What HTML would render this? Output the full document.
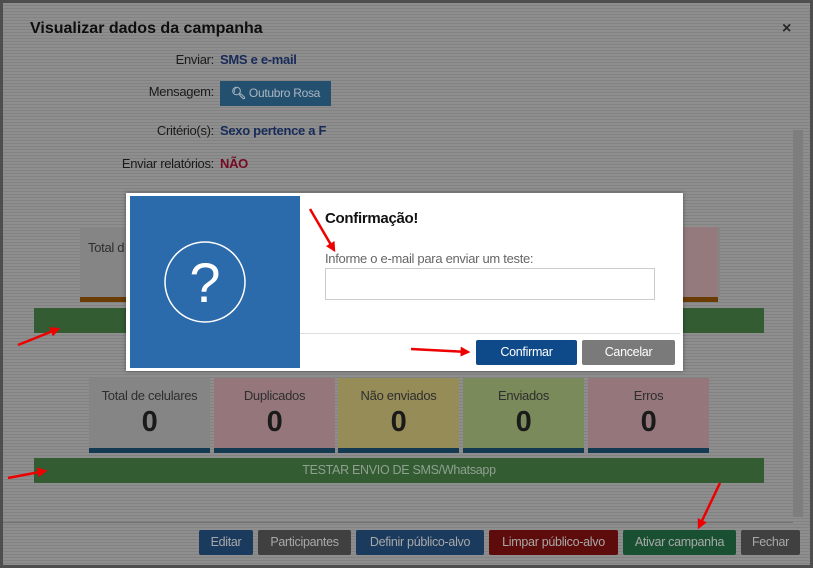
<!DOCTYPE html>
<html><head><meta charset="utf-8"><style>
*{margin:0;padding:0;box-sizing:border-box}
body{width:813px;height:568px;overflow:hidden;position:relative;background:#4e4e4e;font-family:"Liberation Sans",sans-serif}
.a{position:absolute}
.nr{letter-spacing:-0.3px}
#m{left:3px;top:3px;width:807px;height:562px;background:repeating-linear-gradient(180deg,#8e8e8e 0,#8e8e8e 2px,#828282 2px,#828282 3px)}
.lbl{position:absolute;right:599px;font-size:13px;color:#1a1a1a;text-align:right;white-space:nowrap}
.val{position:absolute;left:220px;font-size:13px;font-weight:bold;color:#172b58}
.box{position:absolute;top:378px;height:75px;width:121px;text-align:center;border-bottom:5px solid #143a52}
.box .t{font-size:13px;color:#2e2e2e;margin-top:10px}
.box .n{font-size:29px;font-weight:bold;color:#1a1a1a;margin-top:3px}
.btn{position:absolute;top:530px;height:25px;color:#a8a8a8;font-size:12.5px;line-height:25px;text-align:center;border-radius:2px}
</style></head><body>
<div id="m" class="a"></div>
<div class="a" style="left:30px;top:20px;font-size:16px;font-weight:bold;color:#0e0e0e">Visualizar dados da campanha</div>
<div class="a" style="left:782px;top:20px;font-size:16px;font-weight:bold;color:#262626">×</div>
<div class="lbl nr" style="top:52px">Enviar:</div><div class="val nr" style="top:52px">SMS e e-mail</div>
<div class="lbl nr" style="top:84px">Mensagem:</div>
<div class="a nr" style="left:220px;top:81px;width:111px;height:25px;background:#24506f;color:#aab6c2;font-size:12px;line-height:25px;text-align:center"><b>&#x1F50D;&#xFE0E;</b> Outubro Rosa</div>
<div class="lbl nr" style="top:123px">Critério(s):</div><div class="val nr" style="top:123px">Sexo pertence a F</div>
<div class="lbl nr" style="top:156px">Enviar relatórios:</div><div class="val nr" style="top:156px;color:#760a22">NÃO</div>
<div class="a" style="left:793px;top:130px;width:10px;height:387px;background:#7e7e7e"></div>
<div class="a" style="left:80px;top:227px;width:640px;height:70px;background:#858585"></div>
<div class="a" style="left:600px;top:227px;width:118px;height:70px;background:#957a7d"></div>
<div class="a" style="left:80px;top:297px;width:638px;height:5px;background:#6b3b04"></div>
<div class="a nr" style="left:88px;top:240px;font-size:13px;color:#2e2e2e">Total d</div>
<div class="a" style="left:34px;top:308px;width:730px;height:25px;background:#335c33"></div>
<div class="box nr" style="left:89px;background:#858585"><div class="t">Total de celulares</div><div class="n">0</div></div>
<div class="box nr" style="left:214px;background:#95777b"><div class="t">Duplicados</div><div class="n">0</div></div>
<div class="box nr" style="left:338px;background:#958c58"><div class="t">Não enviados</div><div class="n">0</div></div>
<div class="box nr" style="left:463px;background:#7a8a5a"><div class="t">Enviados</div><div class="n">0</div></div>
<div class="box nr" style="left:588px;background:#95777b"><div class="t">Erros</div><div class="n">0</div></div>
<div class="a nr" style="left:34px;top:458px;width:730px;height:25px;background:#335c33;color:#8fa08f;font-size:12.5px;line-height:25px;text-align:center">TESTAR ENVIO DE SMS/Whatsapp</div>
<div class="a" style="left:3px;top:522px;width:790px;height:1px;background:#707070"></div>
<div class="btn nr" style="left:199px;width:54px;background:#1a3a5e">Editar</div>
<div class="btn nr" style="left:258px;width:93px;background:#404040">Participantes</div>
<div class="btn nr" style="left:356px;width:128px;background:#1a3a5e">Definir público-alvo</div>
<div class="btn nr" style="left:489px;width:129px;background:#5e0b0b">Limpar público-alvo</div>
<div class="btn nr" style="left:623px;width:113px;background:#195032">Ativar campanha</div>
<div class="btn nr" style="left:741px;width:59px;background:#404040">Fechar</div>
<div class="a" style="left:126px;top:193px;width:557px;height:178px;background:#fff;box-shadow:0 0 4px rgba(0,0,0,.4)"></div>
<div class="a" style="left:130px;top:196px;width:170px;height:172px;background:#2b6aab"></div>
<svg class="a" style="left:130px;top:196px" width="170" height="172"><ellipse cx="75" cy="86" rx="40" ry="40" fill="none" stroke="#fff" stroke-width="1.5"/><text x="75" y="106" text-anchor="middle" font-family="Liberation Sans" font-size="56" fill="#fff">?</text></svg>
<div class="a nr" style="left:325px;top:210px;font-size:15px;font-weight:bold;color:#111">Confirmação!</div>
<div class="a nr" style="left:325px;top:251px;font-size:13px;color:#666">Informe o e-mail para enviar um teste:</div>
<div class="a" style="left:325px;top:268px;width:330px;height:32px;border:1px solid #ccc"></div>
<div class="a" style="left:300px;top:333px;width:380px;height:1px;background:#ddd"></div>
<div class="a nr" style="left:476px;top:340px;width:101px;height:25px;background:#0e4a8a;color:#fff;font-size:12.5px;line-height:25px;text-align:center;border-radius:2px">Confirmar</div>
<div class="a nr" style="left:582px;top:340px;width:93px;height:25px;background:#7a7a7a;color:#fff;font-size:12.5px;line-height:25px;text-align:center;border-radius:2px">Cancelar</div>
<svg class="a" style="left:0;top:0" width="813" height="568">
<defs><marker id="h" markerWidth="4" markerHeight="4" refX="3" refY="2" orient="auto"><path d="M0,0 L4,2 L0,4 z" fill="#e00"/></marker></defs>
<g stroke="#e00" stroke-width="2.5" fill="none" marker-end="url(#h)">
<line x1="310" y1="209" x2="334" y2="250"/>
<line x1="18" y1="345" x2="58" y2="329"/>
<line x1="411" y1="349" x2="468" y2="352"/>
<line x1="8" y1="478" x2="45" y2="471"/>
<line x1="720" y1="483" x2="699" y2="527"/>
</g></svg>
</body></html>
